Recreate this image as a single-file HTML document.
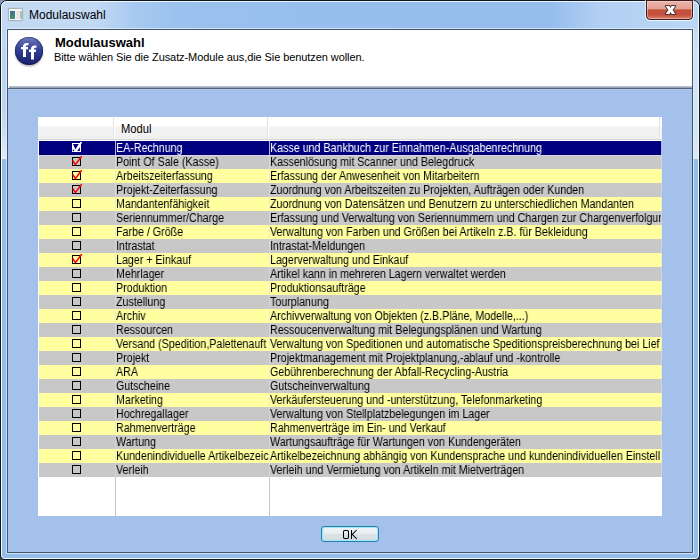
<!DOCTYPE html>
<html><head><meta charset="utf-8">
<style>
*{box-sizing:border-box;margin:0;padding:0}
html,body{width:700px;height:560px;overflow:hidden;background:linear-gradient(180deg,#8898b0 0,#8898b0 30px,#3a4048 540px)}
body{position:relative;font-family:"Liberation Sans",sans-serif;}
#win{position:absolute;left:0;top:0;width:700px;height:560px;border:1px solid #0e1620;border-radius:7px 7px 5px 5px;
 background:linear-gradient(90deg,#c4daf2 0px,#c2d9f3 95px,#a6c9f0 135px,#9bc2ee 175px,#97bfee 300px,#96beed 550px,#b2d0f3 600px,#bcd7f5 700px);}
#win:before{content:"";position:absolute;left:0;top:0;right:0;bottom:0;border:1px solid rgba(255,255,255,.8);border-radius:6px 6px 4px 4px}
#sideL{position:absolute;left:2px;top:29px;width:5px;height:130px;background:linear-gradient(180deg,#bed7f2 0,#b9d3f0 60%,#cfe2f6 85%,#e0ecf8 100%)}
#sideR{position:absolute;left:693px;top:29px;width:5px;height:130px;background:linear-gradient(180deg,#c4dbf4 0,#d0e3f7 18%,#d4e5f7 80%,#dbe9f8 100%)}
#frameb{position:absolute;left:2px;top:159px;width:696px;height:399px;background:#94bde9;border-radius:0 0 3px 3px}
#ticon{position:absolute;left:8px;top:8px;width:15px;height:13px;border:1px solid #a9b4bf;background:#f4f6f8;border-radius:1px;box-shadow:0 0 1px rgba(80,90,110,.5)}
#ticon:before{content:"";position:absolute;left:1px;top:2px;width:5px;height:8px;background:linear-gradient(180deg,#3f6f94,#3d9a72)}
#ticon:after{content:"";position:absolute;left:7px;top:2px;width:6px;height:8px;background:linear-gradient(90deg,#ebe6e2 0,#ebe6e2 4px,#aac4b4 4px)}
#title{position:absolute;left:29px;top:7px;font-size:12px;color:#000;line-height:16px}
#close{position:absolute;left:646px;top:0px;width:47px;height:20px;border:1px solid #3a1c1a;border-radius:0 0 4px 4px;
 background:linear-gradient(180deg,#eab4aa 0%,#e3a294 42%,#c4503c 50%,#c65340 78%,#d98170 100%);box-shadow:inset 0 0 0 1px rgba(255,225,215,.45),0 1px 0 rgba(255,255,255,.75),-1px 0 0 rgba(255,255,255,.6),1px 0 0 rgba(255,255,255,.6)}
#client{position:absolute;left:7px;top:29px;width:686px;height:524px;border:1px solid #44546a;background:#a3c1ea;box-shadow:0 0 0 1px rgba(225,240,255,.75)}
#hdr{position:absolute;left:0;top:0;width:684px;height:59px;background:#fff;border-bottom:1px solid #56647c;box-shadow:0 1px 0 #b2c8ea}
#hdr:after{content:"";position:absolute;left:1px;right:0;bottom:0;height:2px;background:linear-gradient(180deg,#c2cad6,#8e9cb2)}
#h1{position:absolute;left:47px;top:5px;font-size:13px;font-weight:bold;line-height:16px;color:#000}
#h2{position:absolute;left:46px;top:20px;font-size:11px;line-height:14px;color:#000;letter-spacing:-0.08px}
#logo{position:absolute;left:7px;top:6.5px;width:28px;height:28px;border-radius:50%;
 background:linear-gradient(180deg,#7682c2 0%,#5562ac 18%,#34409a 45%,#232d7e 75%,#1a216a 100%);box-shadow:inset 0 0 1px 0.5px rgba(10,14,60,.8),0 1.5px 2px rgba(0,0,0,.3)}
#tbl{position:absolute;left:38px;top:117px;width:624px;height:399px;background:#fff;overflow:hidden}
#th{position:absolute;left:0;top:0;width:624px;height:23px;background:linear-gradient(180deg,#fff 0,#fff 9px,#f2f2f2 10px,#f0f0f0 22px);border-bottom:1px solid #d8d8d8}
#th .s{position:absolute;top:0;width:1px;height:22px;background:#fdfdfd;box-shadow:-1px 0 0 #e4e4e4}
#th span{position:absolute;left:83px;top:5px;font-size:12px;line-height:14px;color:#000;transform:scaleX(0.93);transform-origin:0 0}
.vl{position:absolute;top:24px;width:1px;height:375px;background:#c6c6c6}
.row{position:absolute;left:1px;width:623px;height:14px;font-size:12px;line-height:14px;color:#000;white-space:nowrap}
.row span{display:inline-block;transform:scaleX(0.89);transform-origin:0 0;will-change:transform}
.row.y{background:#ffffa0}
.row.y>div{border-color:#eeeccc}
.row.g{background:#c8c8c8}
.row.g>div{border-color:#d4d4d4}
.row.sel{background:#000080;color:#fff;box-shadow:inset 0 -1px 0 #000064}
.row.sel>div{border-color:#b4b4f0}
.row>div{position:absolute;top:0;height:14px;overflow:hidden}
.c1{overflow:visible!important}
.cb{position:absolute;left:0;top:0;overflow:visible}
.c1{left:0;width:76px}
.c2{left:76px;width:154px;padding-left:0;border-left:1px solid}
.c3{left:230px;width:393px;padding-left:0;border-left:1px solid;border-right:1px solid}
.box{position:absolute;left:33px;top:2px;width:9px;height:9px;border:1px solid #000}
.sel .box{border-color:#fff}
.ck{position:absolute;left:0;top:-3px;width:12px;height:12px}
.ck:before{content:"";position:absolute;left:1px;top:5px;width:2px;height:5px;background:#f00;transform:rotate(-35deg)}
.ck:after{content:"";position:absolute;left:5px;top:0px;width:2px;height:10px;background:#f00;transform:rotate(35deg)}
.sel .ck:before,.sel .ck:after{background:#fff}
#ok{position:absolute;left:321px;top:526px;width:58px;height:16px;border:1px solid #2a7eaa;border-radius:3px;
 background:linear-gradient(180deg,#f0f6f8 0,#e9eff1 45%,#dbe2e5 55%,#d6dde1 100%);box-shadow:inset 0 0 0 1px #9ae8fa,inset 1px 0 1px 1px rgba(170,245,255,.6)}
#ok span{position:absolute;left:-1px;right:0;top:1px;text-align:center;font-size:12px;line-height:14px;color:#000;transform:scaleX(0.82)}
</style></head><body>
<div id="win"></div>
<div id="sideL"></div><div id="sideR"></div><div id="frameb"></div>
<div id="ticon"></div>
<div id="title">Modulauswahl</div>
<div id="close"><svg width="47" height="20" viewBox="0 0 47 20" style="position:absolute;left:-1px;top:-1px"><polygon points="19.8,6 23.3,6 24.5,8 25.7,6 29.2,6 26.6,10 29.2,14 25.7,14 24.5,12 23.3,14 19.8,14 22.4,10" fill="#fff" stroke="#4a3434" stroke-width="2" stroke-linejoin="round" paint-order="stroke"/></svg></div>
<div id="client">
 <div id="hdr">
  <div id="logo"></div>
  <div id="h1">Modulauswahl</div>
  <div id="h2">Bitte wählen Sie die Zusatz-Module aus,die Sie benutzen wollen.</div>
 </div>
</div>
<div id="tbl">
 <div id="th"><div class="s" style="left:76px"></div><div class="s" style="left:230px"></div><div class="s" style="left:622px;background:#fafafa"></div><span>Modul</span></div>
 <div class="vl" style="left:77px"></div><div class="vl" style="left:231px"></div>
<div class="row sel" style="top:24px"><div class="c1"><svg class="cb" width="76" height="14"><rect x="33" y="2" width="9" height="9" fill="#fff"/><polygon points="34,3.1 39.7,3.1 36.4,8.6" fill="#000080"/><circle cx="34.4" cy="9.4" r="0.8" fill="#000080"/><polygon points="40.9,6 40.9,9.9 38.2,9.9" fill="#000080"/><circle cx="42" cy="1.8" r="1" fill="#fff"/></svg></div><div class="c2"><span>EA-Rechnung</span></div><div class="c3"><span>Kasse und Bankbuch zur Einnahmen-Ausgabenrechnung</span></div></div>
<div class="row g" style="top:38px;box-shadow:inset 0 1px 0 #d2d2f6"><div class="c1"><svg class="cb" width="76" height="14"><rect x="33.5" y="2.5" width="8" height="8" fill="none" stroke="#000" stroke-width="1"/><polyline points="34,5.8 36.4,9.6 42.3,1.7" fill="none" stroke="#f00" stroke-width="1.55" stroke-linecap="round" stroke-linejoin="round"/></svg></div><div class="c2"><span>Point Of Sale (Kasse)</span></div><div class="c3"><span>Kassenlösung mit Scanner und Belegdruck</span></div></div>
<div class="row y" style="top:52px"><div class="c1"><svg class="cb" width="76" height="14"><rect x="33.5" y="2.5" width="8" height="8" fill="none" stroke="#000" stroke-width="1"/><polyline points="34,5.8 36.4,9.6 42.3,1.7" fill="none" stroke="#f00" stroke-width="1.55" stroke-linecap="round" stroke-linejoin="round"/></svg></div><div class="c2"><span>Arbeitszeiterfassung</span></div><div class="c3"><span>Erfassung der Anwesenheit von Mitarbeitern</span></div></div>
<div class="row g" style="top:66px"><div class="c1"><svg class="cb" width="76" height="14"><rect x="33.5" y="2.5" width="8" height="8" fill="none" stroke="#000" stroke-width="1"/><polyline points="34,5.8 36.4,9.6 42.3,1.7" fill="none" stroke="#f00" stroke-width="1.55" stroke-linecap="round" stroke-linejoin="round"/></svg></div><div class="c2"><span>Projekt-Zeiterfassung</span></div><div class="c3"><span>Zuordnung von Arbeitszeiten zu Projekten, Aufträgen oder Kunden</span></div></div>
<div class="row y" style="top:80px"><div class="c1"><svg class="cb" width="76" height="14"><rect x="33.5" y="2.5" width="8" height="8" fill="none" stroke="#000" stroke-width="1"/></svg></div><div class="c2"><span>Mandantenfähigkeit</span></div><div class="c3"><span>Zuordnung von Datensätzen und Benutzern zu unterschiedlichen Mandanten</span></div></div>
<div class="row g" style="top:94px"><div class="c1"><svg class="cb" width="76" height="14"><rect x="33.5" y="2.5" width="8" height="8" fill="none" stroke="#000" stroke-width="1"/></svg></div><div class="c2"><span>Seriennummer/Charge</span></div><div class="c3"><span>Erfassung und Verwaltung von Seriennummern und Chargen zur Chargenverfolgun</span></div></div>
<div class="row y" style="top:108px"><div class="c1"><svg class="cb" width="76" height="14"><rect x="33.5" y="2.5" width="8" height="8" fill="none" stroke="#000" stroke-width="1"/></svg></div><div class="c2"><span>Farbe / Größe</span></div><div class="c3"><span>Verwaltung von Farben und Größen bei Artikeln z.B. für Bekleidung</span></div></div>
<div class="row g" style="top:122px"><div class="c1"><svg class="cb" width="76" height="14"><rect x="33.5" y="2.5" width="8" height="8" fill="none" stroke="#000" stroke-width="1"/></svg></div><div class="c2"><span>Intrastat</span></div><div class="c3"><span>Intrastat-Meldungen</span></div></div>
<div class="row y" style="top:136px"><div class="c1"><svg class="cb" width="76" height="14"><rect x="33.5" y="2.5" width="8" height="8" fill="none" stroke="#000" stroke-width="1"/><polyline points="34,5.8 36.4,9.6 42.3,1.7" fill="none" stroke="#f00" stroke-width="1.55" stroke-linecap="round" stroke-linejoin="round"/></svg></div><div class="c2"><span>Lager + Einkauf</span></div><div class="c3"><span>Lagerverwaltung und Einkauf</span></div></div>
<div class="row g" style="top:150px"><div class="c1"><svg class="cb" width="76" height="14"><rect x="33.5" y="2.5" width="8" height="8" fill="none" stroke="#000" stroke-width="1"/></svg></div><div class="c2"><span>Mehrlager</span></div><div class="c3"><span>Artikel kann in mehreren Lagern verwaltet werden</span></div></div>
<div class="row y" style="top:164px"><div class="c1"><svg class="cb" width="76" height="14"><rect x="33.5" y="2.5" width="8" height="8" fill="none" stroke="#000" stroke-width="1"/></svg></div><div class="c2"><span>Produktion</span></div><div class="c3"><span>Produktionsaufträge</span></div></div>
<div class="row g" style="top:178px"><div class="c1"><svg class="cb" width="76" height="14"><rect x="33.5" y="2.5" width="8" height="8" fill="none" stroke="#000" stroke-width="1"/></svg></div><div class="c2"><span>Zustellung</span></div><div class="c3"><span>Tourplanung</span></div></div>
<div class="row y" style="top:192px"><div class="c1"><svg class="cb" width="76" height="14"><rect x="33.5" y="2.5" width="8" height="8" fill="none" stroke="#000" stroke-width="1"/></svg></div><div class="c2"><span>Archiv</span></div><div class="c3"><span>Archivverwaltung von Objekten (z.B.Pläne, Modelle,...)</span></div></div>
<div class="row g" style="top:206px"><div class="c1"><svg class="cb" width="76" height="14"><rect x="33.5" y="2.5" width="8" height="8" fill="none" stroke="#000" stroke-width="1"/></svg></div><div class="c2"><span>Ressourcen</span></div><div class="c3"><span>Ressoucenverwaltung mit Belegungsplänen und Wartung</span></div></div>
<div class="row y" style="top:220px"><div class="c1"><svg class="cb" width="76" height="14"><rect x="33.5" y="2.5" width="8" height="8" fill="none" stroke="#000" stroke-width="1"/></svg></div><div class="c2"><span>Versand (Spedition,Palettenauft</span></div><div class="c3"><span>Verwaltung von Speditionen und automatische Speditionspreisberechnung bei Lief</span></div></div>
<div class="row g" style="top:234px"><div class="c1"><svg class="cb" width="76" height="14"><rect x="33.5" y="2.5" width="8" height="8" fill="none" stroke="#000" stroke-width="1"/></svg></div><div class="c2"><span>Projekt</span></div><div class="c3"><span>Projektmanagement mit Projektplanung,-ablauf und -kontrolle</span></div></div>
<div class="row y" style="top:248px"><div class="c1"><svg class="cb" width="76" height="14"><rect x="33.5" y="2.5" width="8" height="8" fill="none" stroke="#000" stroke-width="1"/></svg></div><div class="c2"><span>ARA</span></div><div class="c3"><span>Gebührenberechnung der Abfall-Recycling-Austria</span></div></div>
<div class="row g" style="top:262px"><div class="c1"><svg class="cb" width="76" height="14"><rect x="33.5" y="2.5" width="8" height="8" fill="none" stroke="#000" stroke-width="1"/></svg></div><div class="c2"><span>Gutscheine</span></div><div class="c3"><span>Gutscheinverwaltung</span></div></div>
<div class="row y" style="top:276px"><div class="c1"><svg class="cb" width="76" height="14"><rect x="33.5" y="2.5" width="8" height="8" fill="none" stroke="#000" stroke-width="1"/></svg></div><div class="c2"><span>Marketing</span></div><div class="c3"><span>Verkäufersteuerung und -unterstützung, Telefonmarketing</span></div></div>
<div class="row g" style="top:290px"><div class="c1"><svg class="cb" width="76" height="14"><rect x="33.5" y="2.5" width="8" height="8" fill="none" stroke="#000" stroke-width="1"/></svg></div><div class="c2"><span>Hochregallager</span></div><div class="c3"><span>Verwaltung von Stellplatzbelegungen im Lager</span></div></div>
<div class="row y" style="top:304px"><div class="c1"><svg class="cb" width="76" height="14"><rect x="33.5" y="2.5" width="8" height="8" fill="none" stroke="#000" stroke-width="1"/></svg></div><div class="c2"><span>Rahmenverträge</span></div><div class="c3"><span>Rahmenverträge im Ein- und Verkauf</span></div></div>
<div class="row g" style="top:318px"><div class="c1"><svg class="cb" width="76" height="14"><rect x="33.5" y="2.5" width="8" height="8" fill="none" stroke="#000" stroke-width="1"/></svg></div><div class="c2"><span>Wartung</span></div><div class="c3"><span>Wartungsaufträge für Wartungen von Kundengeräten</span></div></div>
<div class="row y" style="top:332px"><div class="c1"><svg class="cb" width="76" height="14"><rect x="33.5" y="2.5" width="8" height="8" fill="none" stroke="#000" stroke-width="1"/></svg></div><div class="c2"><span>Kundenindividuelle Artikelbezeic</span></div><div class="c3"><span>Artikelbezeichnung abhängig von Kundensprache und kundenindividuellen Einstell</span></div></div>
<div class="row g" style="top:346px"><div class="c1"><svg class="cb" width="76" height="14"><rect x="33.5" y="2.5" width="8" height="8" fill="none" stroke="#000" stroke-width="1"/></svg></div><div class="c2"><span>Verleih</span></div><div class="c3"><span>Verleih und Vermietung von Artikeln mit Mietverträgen</span></div></div>

</div>
<svg id="ffsvg" width="50" height="70" style="position:absolute;left:0;top:0"><path d="M23,57 L23,49.3 L21,49.3 L21,47 L23,47 L23,46.5 C23,44.2 24.3,43 26.5,43 L28.5,43 L28.5,45.2 L27.2,45.2 C26.4,45.2 26,45.6 26,46.4 L26,47 L28,47 L28,49.3 L26,49.3 L26,57 Z" fill="#fff"/><path transform="translate(8,2.6)" d="M23,57 L23,49.3 L21,49.3 L21,47 L23,47 L23,46.5 C23,44.2 24.3,43 26.5,43 L28.5,43 L28.5,45.2 L27.2,45.2 C26.4,45.2 26,45.6 26,46.4 L26,47 L28,47 L28,49.3 L26,49.3 L26,57 Z" fill="#fff"/></svg>
<div id="ok"><svg width="58" height="16" style="position:absolute;left:-1px;top:-1px"><rect x="22.5" y="4.5" width="5" height="8" rx="1.3" fill="none" stroke="#000" stroke-width="1.05"/><path d="M30.5,4 L30.5,13 M31,8.6 L35.6,4 M31.3,8.3 L35.8,13" stroke="#000" stroke-width="1.05" fill="none"/></svg></div>
</body></html>
